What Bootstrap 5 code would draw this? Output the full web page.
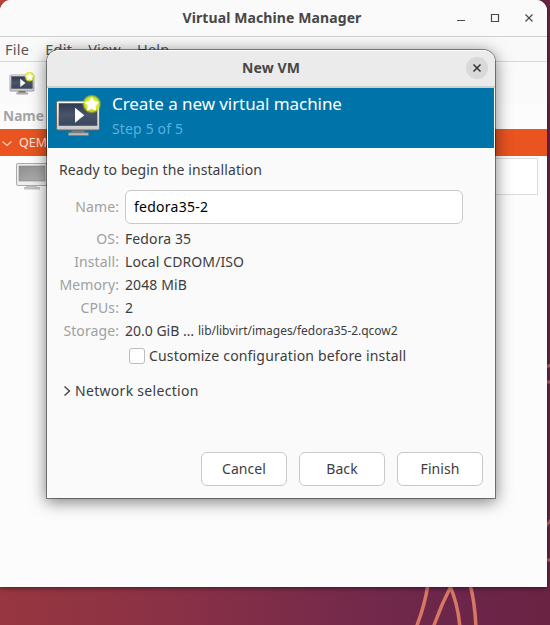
<!DOCTYPE html>
<html lang="en">
<head>
<meta charset="utf-8">
<meta name="viewport" content="width=device-width, initial-scale=1">
<title>Virtual Machine Manager</title>
<link href="https://cdn.jsdelivr.net/npm/bootstrap@5.3.0/dist/css/bootstrap.min.css" rel="stylesheet">
<style>
body { font-family: "Noto Sans", "Open Sans", sans-serif; font-size: 14px; line-height: 20px; color: #3d3d3d; height: 625px; background: #6d264a; }
.desktop { width: 550px; height: 625px; background: radial-gradient(circle at 0 0, #c44a3c 0, rgba(190,70,60,0) 30px), linear-gradient(90deg, #97363f 0, #8a3146 170px, #762a4a 340px, #6b264a 450px, #6b2343 550px); }
.wall { left: 0; top: 0; }
.main-win { width: 547px; height: 587px; background: #fcfcfc; border-radius: 11px 11px 0 0; box-shadow: 0 1px 5px rgba(0,0,0,.5); }
.titlebar { height: 37px; background: #fafafa; border-bottom: 1px solid #d0d0d0; padding-right: 3px; }
.win-title { font-weight: 700; color: #474747; letter-spacing: .1px; }
.menus { height: 25px; background: #f9f9f9; border-bottom: 1px solid #d8d8d8; padding: 0 0 0 5px; gap: 16px; color: #555; font-size: 14.5px; letter-spacing: .25px; }
.tools { height: 41px; background: #fafafa; padding-left: 9px; }
.tools svg { margin-bottom: 1px; }
.col-head { height: 26px; padding-left: 3px; font-weight: 700; color: #a5a5a5; font-size: 13.7px; }
.conn { height: 27px; background: #e95420; color: #fbe4dc; font-size: 12.5px; }
.vm-row { height: 40px; }
.graph { width: 100px; height: 37px; margin: 2px 9px 0 0; background: #fff; border: 1px solid #dcdcdc; }
.dialog-win { left: 47px; top: 50px; width: 448px; height: 448px; background: #fafafa; border-radius: 12px 12px 0 0; box-shadow: 0 0 0 1px rgba(0,0,0,.42), 0 3px 16px 1px rgba(0,0,0,.5); }
.dialog-head { height: 38px; background: #ebebeb; border-bottom: 2px solid #d0cfcd; border-top: 1px solid #fff; border-radius: 12px 12px 0 0; padding-bottom: 2px; }
.close-btn { right: 7px; top: 6px; width: 22px; height: 22px; background: #d9d9d9; }
.banner { height: 60px; margin: 0 1px; background: #0073a9; color: #fff; }
.banner svg { margin: 4px 0 0 7px; }
.banner-text { margin: 4px 0 0 9px; }
.banner-title { font-size: 17px; line-height: 24px; letter-spacing: -.07px; }
.banner-step { color: #58b1e0; line-height: 26px; letter-spacing: .15px; }
.ready { padding: 12px 0 10px 12px; letter-spacing: .1px; }
.name-row { height: 34px; }
.fact-list { padding-top: 3px; }
.fact { height: 23px; }
.key { width: 72px; text-align: right; color: #a0a0a0; margin-right: 6px; letter-spacing: .1px; }
.name-box { width: 338px; height: 34px; border: 1px solid #c9c9c9; border-radius: 6px; background: #fff; color: #000; padding: 0 8px 2px; font-size: 14px; letter-spacing: .25px; }
.fact-value { letter-spacing: .1px; }
.path-text { font-size: 12px; letter-spacing: -.04px; }
.custom { height: 25px; margin: 1px 0 0 82px; gap: 4px; letter-spacing: .17px; }
.net { height: 20px; margin: 13px 0 0 16px; gap: 4px; letter-spacing: .3px; }
.tick { width: 16px; height: 16px; background: #fff; border: 1px solid #bcbcbc; border-radius: 3px; }
.action { width: 86px; height: 34px; background: #fff; border: 1px solid #c8c8c8; border-radius: 6px; font-size: 14px; color: #3d3d3d; padding: 0 0 2px; letter-spacing: .05px; }
.actions { margin: 51px 12px 0 0; gap: 12px; }
</style>
<script src="https://cdn.jsdelivr.net/npm/bootstrap@5.3.0/dist/js/bootstrap.bundle.min.js"></script>
</head>
<body class="overflow-hidden">
<svg width="0" height="0" class="position-absolute">
  <defs>
    <linearGradient id="scr" x1="0" y1="0" x2="0" y2="1"><stop offset="0" stop-color="#2d3a52"/><stop offset=".5" stop-color="#4a5468"/><stop offset="1" stop-color="#39465e"/></linearGradient>
    <linearGradient id="bez" x1="0" y1="0" x2="0" y2="1"><stop offset="0" stop-color="#fff"/><stop offset="1" stop-color="#c9c9c9"/></linearGradient>
    <linearGradient id="off" x1="0" y1="0" x2="1" y2="1"><stop offset="0" stop-color="#8d8d8d"/><stop offset="1" stop-color="#b5b5b5"/></linearGradient>
    <radialGradient id="glow"><stop offset=".45" stop-color="#f5f53c"/><stop offset=".75" stop-color="#d8e41c" stop-opacity=".9"/><stop offset="1" stop-color="#b5d010" stop-opacity="0"/></radialGradient>
    <symbol id="newvm" viewBox="0 0 48 45">
      <path d="M17 37h12l1 4H16z" fill="#777"/><path d="M13.500 40.800h20v2.700h-20z" fill="#c0b8b0" stroke="#777" stroke-width=".6"/>
      <rect x="1.500" y="9" width="43" height="29" rx="1.500" fill="url(#bez)" stroke="#666"/>
      <rect x="4" y="11.500" width="38" height="22" fill="url(#scr)" stroke="#4b4b4b" stroke-width=".6"/>
      <path d="M20 15.700v15l9.300-7.500z" fill="#fff"/>
      <circle cx="36.700" cy="12" r="9.800" fill="url(#glow)"/>
      <path transform="translate(.2 1.600)" d="M36.500 4l2 4.200 4.600.6-3.400 3.200.9 4.600-4.100-2.300-4.100 2.300.9-4.600-3.400-3.200 4.600-.6z" fill="#fff" stroke="#fff" stroke-linejoin="round"/>
    </symbol>
  </defs>
</svg>
<div class="desktop position-relative overflow-hidden">
  <svg class="wall position-absolute" width="550" height="625" fill="none" stroke="#d87862" stroke-width="3.500">
    <path d="M428 584Q425 605 416 628M452 584Q441 605 433 628M449 584Q458 603 460 628M470 584Q475 603 476 628"/>
    <path d="M546 367l5-2M546 382h5M546 526l5-6M546 560h5" stroke="#b65f68" stroke-width="3"/>
  </svg>
  <div class="main-win position-relative d-flex flex-column overflow-hidden">
    <header class="titlebar position-relative d-flex align-items-center justify-content-center flex-shrink-0">
      <span class="win-title">Virtual Machine Manager</span>
      <svg class="position-absolute top-0 end-0" width="100" height="36" fill="none" stroke="#4a4a4a" stroke-width="1.200"><path d="M10 20.500h8M78.500 14.500l7 7M85.500 14.500l-7 7"/><path d="M44.500 14.500h7v7h-7z"/></svg>
    </header>
    <nav class="menus d-flex align-items-center flex-shrink-0"><span>File</span><span>Edit</span><span>View</span><span>Help</span></nav>
    <div class="tools d-flex align-items-center flex-shrink-0"><svg width="27" height="25"><use href="#newvm"/></svg></div>
    <div class="col-head d-flex align-items-center flex-shrink-0">Name</div>
    <div class="conn d-flex align-items-center flex-shrink-0">
      <svg width="19" height="20" fill="none" stroke="#fbd0c0" stroke-width="1.200"><path d="M2.500 8.500l4.500 4 4.500-4"/></svg>QEMU/KVM
    </div>
    <div class="vm-row d-flex justify-content-between flex-shrink-0">
      <svg width="56" height="38"><path d="M26 29h10l1 2h3v2.500H24V31h2z" fill="#c0c0c0"/><rect x="16.500" y="7.500" width="31" height="22" rx="1.500" fill="#eee" stroke="#aaa"/><rect x="19" y="10" width="26" height="15" fill="url(#off)" stroke="#888" stroke-width=".6"/></svg>
      <div class="graph"></div>
    </div>
  </div>

  <section class="dialog-win position-absolute">
    <header class="dialog-head position-relative d-flex align-items-center justify-content-center">
      <span class="win-title">New VM</span>
      <span class="close-btn position-absolute rounded-circle d-flex align-items-center justify-content-center"><svg width="10" height="10" fill="none" stroke="#333" stroke-width="1.500"><path d="M1.500 1.500l7 7M8.500 1.500l-7 7"/></svg></span>
    </header>
    <div class="banner d-flex">
      <svg class="flex-shrink-0" width="48" height="45"><use href="#newvm"/></svg>
      <div class="banner-text"><div class="banner-title">Create a new virtual machine</div><div class="banner-step">Step 5 of 5</div></div>
    </div>
    <div class="ready">Ready to begin the installation</div>
    <div class="name-row d-flex align-items-center"><label class="key" for="vmname">Name:</label><input id="vmname" class="name-box" value="fedora35-2"></div>
    <div class="fact-list">
      <div class="fact d-flex align-items-center"><span class="key">OS:</span><span class="fact-value">Fedora 35</span></div>
      <div class="fact d-flex align-items-center"><span class="key">Install:</span><span class="fact-value">Local CDROM/ISO</span></div>
      <div class="fact d-flex align-items-center"><span class="key">Memory:</span><span class="fact-value">2048 MiB</span></div>
      <div class="fact d-flex align-items-center"><span class="key">CPUs:</span><span class="fact-value">2</span></div>
      <div class="fact d-flex align-items-center"><span class="key">Storage:</span><span>20.0 GiB …</span><span class="path-text ms-1">lib/libvirt/images/fedora35-2.qcow2</span></div>
    </div>
    <div class="custom d-flex align-items-center"><span class="tick"></span><span>Customize configuration before install</span></div>
    <div class="net d-flex align-items-center"><svg width="8" height="12" fill="none" stroke="#3d3d3d" stroke-width="1.300"><path d="M1.500 1.500l5 4.500-5 4.500"/></svg><span>Network selection</span></div>
    <div class="actions d-flex justify-content-end"><button class="btn action">Cancel</button><button class="btn action">Back</button><button class="btn action">Finish</button></div>
  </section>
</div>
</body>
</html>
